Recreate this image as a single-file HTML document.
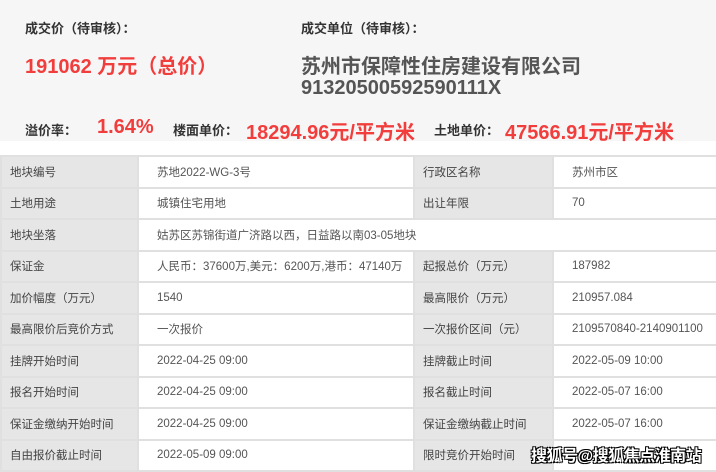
<!DOCTYPE html>
<html><head><meta charset="utf-8"><style>
*{margin:0;padding:0;box-sizing:border-box}
body{width:716px;height:471px;overflow:hidden;background:#fff;font-family:"Liberation Sans","Noto Sans CJK SC",sans-serif;position:relative}
.top{position:absolute;left:0;top:0;width:716px;height:141px;background:#f6f6f6}
.t{position:absolute;white-space:nowrap}
.lab{font-size:13px;color:#333;font-weight:bold}
.red{color:#f23d3d;font-weight:bold}
.gr{color:#555;font-weight:bold;font-size:20px}
table{position:absolute;left:0;top:155px;width:716px;border-collapse:collapse;font-size:11.5px;color:#555;table-layout:fixed}
td{height:31.5px;border:2px solid #e0e0e0;padding-left:8px;white-space:nowrap;overflow:hidden}
td.k{background:#e6e6e6;color:#444}
td.v{padding-left:18px;background:#fff}
.wm{position:absolute;left:531px;top:442px;font-size:16px;font-weight:bold;color:#fff;text-shadow:-1px -1px 0 #000,1px -1px 0 #000,-1px 1px 0 #000,1px 1px 0 #000;letter-spacing:-0.5px}
</style></head><body>
<div class="top"></div>
<div class="t lab" style="left:25px;top:18px">成交价（待审核）：</div>
<div class="t lab" style="left:301px;top:18px">成交单位（待审核）：</div>
<div class="t red" style="left:25px;top:50px;font-size:20px">191062 万元（总价）</div>
<div class="t gr" style="left:301px;top:50px">苏州市保障性住房建设有限公司</div>
<div class="t gr" style="left:301px;top:77px">91320500592590111X</div>
<div class="t lab" style="left:25px;top:120px">溢价率：</div>
<div class="t red" style="left:97px;top:116px;font-size:20px">1.64%</div>
<div class="t lab" style="left:173px;top:120px">楼面单价：</div>
<div class="t red" style="left:246px;top:116px;font-size:20px">18294.96元/平方米</div>
<div class="t lab" style="left:434px;top:120px">土地单价：</div>
<div class="t red" style="left:505px;top:116px;font-size:20px">47566.91元/平方米</div>
<table>
<colgroup><col style="width:137px"><col style="width:276px"><col style="width:139px"><col style="width:164px"></colgroup>
<tr><td class="k">地块编号</td><td class="v">苏地2022-WG-3号</td><td class="k">行政区名称</td><td class="v">苏州市区</td></tr>
<tr><td class="k">土地用途</td><td class="v">城镇住宅用地</td><td class="k">出让年限</td><td class="v">70</td></tr>
<tr><td class="k">地块坐落</td><td colspan="3" style="padding-left:18px">姑苏区苏锦街道广济路以西，日益路以南03-05地块</td></tr>
<tr><td class="k">保证金</td><td class="v">人民币：37600万,美元：6200万,港币：47140万</td><td class="k">起报总价（万元）</td><td class="v">187982</td></tr>
<tr><td class="k">加价幅度（万元）</td><td class="v">1540</td><td class="k">最高限价（万元）</td><td class="v">210957.084</td></tr>
<tr><td class="k">最高限价后竞价方式</td><td class="v">一次报价</td><td class="k">一次报价区间（元）</td><td class="v">2109570840-2140901100</td></tr>
<tr><td class="k">挂牌开始时间</td><td class="v">2022-04-25 09:00</td><td class="k">挂牌截止时间</td><td class="v">2022-05-09 10:00</td></tr>
<tr><td class="k">报名开始时间</td><td class="v">2022-04-25 09:00</td><td class="k">报名截止时间</td><td class="v">2022-05-07 16:00</td></tr>
<tr><td class="k">保证金缴纳开始时间</td><td class="v">2022-04-25 09:00</td><td class="k">保证金缴纳截止时间</td><td class="v">2022-05-07 16:00</td></tr>
<tr><td class="k">自由报价截止时间</td><td class="v">2022-05-09 09:00</td><td class="k">限时竞价开始时间</td><td class="v"></td></tr>
</table>
<div class="wm">搜狐号@搜狐焦点淮南站</div>
</body></html>
